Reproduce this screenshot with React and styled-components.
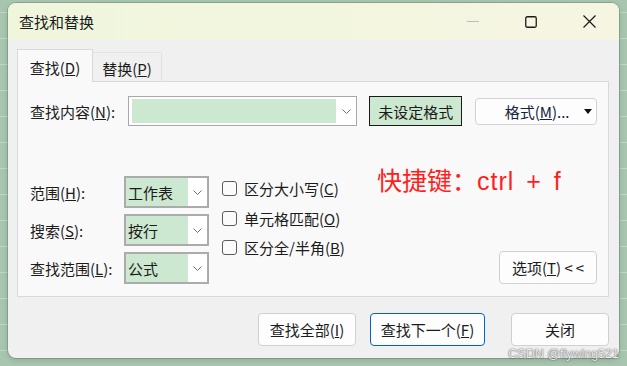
import React from "react";
import styled, { createGlobalStyle } from "styled-components";

const GlobalStyle = createGlobalStyle`
  html, body { margin: 0; padding: 0; }
  body {
    background-color: #a8c6af;
    background-image: repeating-linear-gradient(
      to bottom,
      transparent 0 12px,
      rgba(255, 255, 255, 0.3) 12px 13px,
      transparent 13px 26px
    );
    font-family: "Noto Sans CJK SC", "Noto Sans", sans-serif;
    color: #1b1b1b;
  }
`;

function Chevron() {
  return (
    <svg width="9" height="5" viewBox="0 0 9 5">
      <polyline points="0.5,0.5 4.5,4.5 8.5,0.5" fill="none" stroke="#707070" strokeWidth="1" />
    </svg>
  );
}

function Dropdown({ value }) {
  return (
    <SelectBox>
      <SelectValue>{value}</SelectValue>
      <SelectArrow><Chevron /></SelectArrow>
    </SelectBox>
  );
}

function Check({ children }) {
  return (
    <CheckRow>
      <CheckBox />
      <span>{children}</span>
    </CheckRow>
  );
}

function App() {
  return (
    <Page>
      <GlobalStyle />
      <Window>
        <TitleBar>
          <Title>查找和替换</Title>
          <Caption>
            <svg width="12" height="12" viewBox="0 0 12 12">
              <line x1="0" y1="5.5" x2="12" y2="5.5" stroke="#bdbdbd" strokeWidth="1" />
            </svg>
          </Caption>
          <Caption>
            <svg width="12" height="12" viewBox="0 0 12 12">
              <rect x="0.75" y="0.75" width="10.5" height="10.5" rx="1.5" fill="none" stroke="#1a1a1a" strokeWidth="1.3" />
            </svg>
          </Caption>
          <Caption>
            <svg width="13" height="13" viewBox="0 0 13 13">
              <path d="M0.5 0.5 L12.5 12.5 M12.5 0.5 L0.5 12.5" stroke="#1a1a1a" strokeWidth="1.2" />
            </svg>
          </Caption>
        </TitleBar>

        <Body>
          <TabStrip>
            <Tab $active>查找(<u>D</u>)</Tab>
            <Tab>替换(<u>P</u>)</Tab>
          </TabStrip>

          <Panel>
            <TopRow>
              <FieldLabel>查找内容(<u>N</u>):</FieldLabel>
              <Combo>
                <ComboInput />
                <ComboArrow><Chevron /></ComboArrow>
              </Combo>
              <FormatStatus>未设定格式</FormatStatus>
              <FormatButton>
                <span>格式(<u>M</u>)...</span>
                <Triangle />
              </FormatButton>
            </TopRow>

            <Lower>
              <FieldGrid>
                <GridLabel>范围(<u>H</u>):</GridLabel>
                <Dropdown value="工作表" />
                <GridLabel>搜索(<u>S</u>):</GridLabel>
                <Dropdown value="按行" />
                <GridLabel>查找范围(<u>L</u>):</GridLabel>
                <Dropdown value="公式" />
              </FieldGrid>

              <CheckList>
                <Check>区分大小写(<u>C</u>)</Check>
                <Check>单元格匹配(<u>O</u>)</Check>
                <Check>区分全/半角(<u>B</u>)</Check>
              </CheckList>

              <RightSide>
                <Hotkey>快捷键：<HotkeyKeys>ctrl + f</HotkeyKeys></Hotkey>
                <DialogButton $w={98}>选项(<u>T</u>)&nbsp;&lt;&thinsp;&lt;</DialogButton>
              </RightSide>
            </Lower>
          </Panel>

          <ButtonRow>
            <DialogButton $w={98}>查找全部(<u>I</u>)</DialogButton>
            <DialogButton $w={115} $primary $gap={14}>查找下一个(<u>F</u>)</DialogButton>
            <DialogButton $w={98} $gap={26}>关闭</DialogButton>
          </ButtonRow>
        </Body>
      </Window>
      <Watermark>CSDN @flywing521</Watermark>
    </Page>
  );
}

export default App;

const Page = styled.div`
  position: relative;
  width: 627px;
  height: 366px;
  overflow: hidden;
  padding: 3px 0 0 8px;
  box-sizing: border-box;
`;

const Window = styled.div`
  width: 611px;
  height: 355px;
  border-radius: 8px;
  background: #f0f0f0;
  overflow: hidden;
  display: flex;
  flex-direction: column;
  box-shadow: 0 0 0 1px rgba(90, 110, 95, 0.35), 0 2px 6px rgba(0, 0, 0, 0.15);
`;

const TitleBar = styled.div`
  height: 37px;
  flex-shrink: 0;
  display: flex;
  align-items: center;
  padding: 0 1px 0 11px;
  background: linear-gradient(90deg, #eff6dc 0%, #f3f6df 50%, #f6f5e2 100%);
`;

const Title = styled.div`
  font-size: 15px;
  margin-top: -1px;
  flex: 1;
`;

const Caption = styled.div`
  width: 58px;
  height: 37px;
  display: flex;
  align-items: center;
  justify-content: center;
`;

const Body = styled.div`
  flex: 1;
  display: flex;
  flex-direction: column;
  padding: 10px 10px 0 9px;
`;

const TabStrip = styled.div`
  height: 32px;
  display: flex;
  align-items: flex-end;
  position: relative;
  z-index: 1;
  margin-bottom: -1px;
`;

const Tab = styled.div`
  box-sizing: border-box;
  height: ${(p) => (p.$active ? "33px" : "30px")};
  width: ${(p) => (p.$active ? "76px" : "69px")};
  display: flex;
  align-items: center;
  justify-content: center;
  padding-top: 3px;
  font-size: 15px;
  background: ${(p) => (p.$active ? "#f9f9f9" : "#f0f0f0")};
  border: 1px solid ${(p) => (p.$active ? "#d9d9d9" : "#e2e2e2")};
  border-bottom: ${(p) => (p.$active ? "none" : "1px solid #d9d9d9")};
  border-left: ${(p) => (p.$active ? "1px solid #d9d9d9" : "none")};
`;

const Panel = styled.div`
  box-sizing: border-box;
  height: 216px;
  border: 1px solid #d9d9d9;
  background: #f9f9f9;
  padding: 14px 11px 13px 12px;
  display: flex;
  flex-direction: column;
`;

const TopRow = styled.div`
  display: flex;
  align-items: center;
  height: 30px;
`;

const FieldLabel = styled.div`
  width: 98px;
  font-size: 15px;
`;

const Combo = styled.div`
  box-sizing: border-box;
  width: 230px;
  height: 30px;
  border: 1px solid #a8a8a8;
  background: #fff;
  padding: 2px 0 2px 3px;
  display: flex;
`;

const ComboInput = styled.div`
  flex: 1;
  background: #cde8d0;
`;

const ComboArrow = styled.div`
  width: 20px;
  display: flex;
  align-items: center;
  justify-content: center;
`;

const FormatStatus = styled.div`
  box-sizing: border-box;
  width: 93px;
  height: 30px;
  margin-left: 12px;
  border: 1px solid #1a1a1a;
  background: #cde8d0;
  font-size: 15px;
  display: flex;
  align-items: center;
  justify-content: center;
`;

const FormatButton = styled.div`
  box-sizing: border-box;
  width: 122px;
  height: 27px;
  margin-left: 13px;
  border: 1px solid #d3d3d3;
  border-radius: 4px;
  background: #fdfdfd;
  font-size: 15px;
  color: #14223a;
  display: flex;
  align-items: center;
  padding: 0 4px 0 14px;
  span { flex: 1; text-align: center; }
`;

const Triangle = styled.div`
  width: 0;
  height: 0;
  border-left: 4px solid transparent;
  border-right: 4px solid transparent;
  border-top: 5px solid #111;
`;

const Lower = styled.div`
  flex: 1;
  display: flex;
  margin-top: 41px;
`;

const FieldGrid = styled.div`
  margin-top: 9px;
  align-self: flex-start;
  display: grid;
  grid-template-columns: 94px 85px;
  grid-auto-rows: 32px;
  row-gap: 6px;
  align-items: center;
`;

const GridLabel = styled.div`
  font-size: 15px;
`;

const SelectBox = styled.div`
  box-sizing: border-box;
  height: 32px;
  border: 2px solid #ababab;
  background: #fff;
  display: flex;
`;

const SelectValue = styled.div`
  flex: 1;
  background: #cde8d0;
  font-size: 15px;
  display: flex;
  align-items: center;
  padding-left: 2px;
`;

const SelectArrow = styled.div`
  width: 19px;
  display: flex;
  align-items: center;
  justify-content: center;
`;

const CheckList = styled.div`
  width: 130px;
  margin-left: 13px;
  padding-top: 14px;
  display: flex;
  flex-direction: column;
  gap: 14.5px;
`;

const CheckRow = styled.div`
  height: 15px;
  display: flex;
  align-items: center;
  font-size: 15px;
  white-space: nowrap;
  span { margin-left: 7px; }
`;

const CheckBox = styled.div`
  box-sizing: border-box;
  width: 15px;
  height: 15px;
  flex-shrink: 0;
  border: 1px solid #5c5c5c;
  border-radius: 3px;
  background: #fbfbfb;
`;

const RightSide = styled.div`
  flex: 1;
  display: flex;
  flex-direction: column;
  align-items: flex-end;
  justify-content: space-between;
`;

const Hotkey = styled.div`
  align-self: flex-start;
  margin-left: 25px;
  margin-top: -1px;
  font-family: "Liberation Sans", "Noto Sans CJK SC", sans-serif;
  font-size: 25px;
  line-height: 30px;
  color: #ff1f1f;
  white-space: nowrap;
`;

const HotkeyKeys = styled.span`
  letter-spacing: 1px;
  word-spacing: 4px;
`;

const DialogButton = styled.div`
  box-sizing: border-box;
  width: ${(p) => p.$w}px;
  height: 33px;
  margin-left: ${(p) => p.$gap || 0}px;
  border: 1px solid ${(p) => (p.$primary ? "#0067c0" : "#d0d0d0")};
  border-radius: 4px;
  background: #fdfdfd;
  font-size: 15px;
  display: flex;
  align-items: center;
  justify-content: center;
  white-space: nowrap;
`;

const ButtonRow = styled.div`
  display: flex;
  justify-content: flex-end;
  margin-top: 16px;
`;

const Watermark = styled.div`
  position: absolute;
  right: 8px;
  bottom: 5px;
  font-family: "Liberation Sans", Arial, sans-serif;
  font-size: 12.5px;
  line-height: 14px;
  color: rgba(248, 248, 248, 0.95);
  text-shadow: 0 0 1px rgba(60, 60, 60, 0.9), 0 0 2px rgba(60, 60, 60, 0.5);
`;
